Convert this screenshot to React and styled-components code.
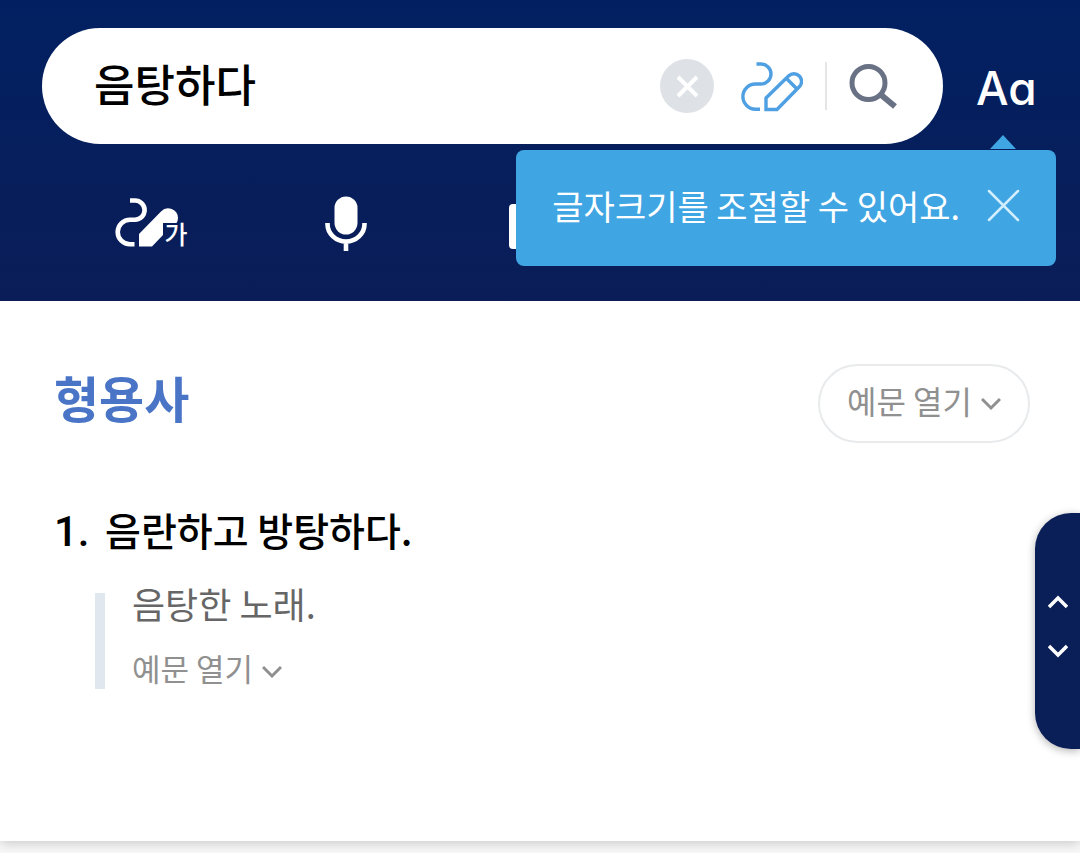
import { useState } from 'react';
import styled, { createGlobalStyle } from 'styled-components';

const GlobalStyle = createGlobalStyle`
    * {
        box-sizing: border-box;
    }

    body {
        margin: 0;
        background: #f8f8f8;
        font-family: 'Noto Sans CJK KR', sans-serif;
    }

    button {
        padding: 0;
        border: none;
        background: none;
        font: inherit;
        color: inherit;
        cursor: pointer;
    }

    svg {
        display: block;
    }
`;

const Page = styled.div`
    position: relative;
    min-height: 100vh;
    overflow: hidden;
`;

const Header = styled.header`
    position: relative;
    padding: 28px 44px 49px 42px;
    background: linear-gradient(#022061, #0a1d58);
`;

const TopRow = styled.div`
    display: flex;
    align-items: center;
    gap: 33px;
`;

const SearchForm = styled.form`
    flex: 1;
    min-width: 0;
    display: flex;
    align-items: center;
    height: 116px;
    padding: 0 46px 0 52px;
    border-radius: 58px;
    background: #fff;
`;

const SearchInput = styled.input`
    flex: 1;
    min-width: 0;
    height: 70px;
    padding: 0 0 6px;
    border: none;
    outline: none;
    background: none;
    font-family: inherit;
    font-size: 44px;
    font-weight: 500;
    line-height: 64px;
    color: #000;
`;

const ClearButton = styled.button`
    display: flex;
    align-items: center;
    justify-content: center;
    width: 54px;
    height: 54px;
    margin-right: 27px;
    border-radius: 50%;
    background: #dee2e7;
`;

const Divider = styled.span`
    width: 2px;
    height: 48px;
    margin: 0 22px;
    background: #e5e5e5;
`;

const FontSizeButton = styled.button`
    width: 60px;
    padding-top: 4px;
    font-family: Inter, sans-serif;
    font-size: 46px;
    font-weight: 500;
    font-feature-settings: 'cv11';
    line-height: 56px;
    color: #fff;
    white-space: nowrap;
`;

const ToolRow = styled.nav`
    display: grid;
    grid-template-columns: repeat(5, 1fr);
    align-items: center;
    height: 56px;
    margin: 52px 7px 0 11px;
    color: #fff;
`;

const ToolButton = styled.button`
    display: flex;
    align-items: center;
    justify-content: center;
`;

const HandwritingIcon = styled.span`
    position: relative;
    width: 72px;
    height: 50px;
    margin-bottom: 3px;
`;

const HandwritingLabel = styled.span`
    position: absolute;
    left: 50px;
    top: 17px;
    font-size: 25px;
    font-weight: 500;
    line-height: 36px;
`;

const Tooltip = styled.div`
    position: absolute;
    z-index: 1;
    top: 150px;
    right: 24px;
    display: flex;
    align-items: center;
    gap: 27px;
    height: 116px;
    padding: 0 36px 5px;
    border-radius: 8px;
    background: #3fa5e3;
    color: #fff;

    &::before {
        content: '';
        position: absolute;
        top: -15px;
        right: 40px;
        border: 13px solid transparent;
        border-top: none;
        border-bottom: 14px solid #3fa5e3;
    }
`;

const TooltipText = styled.p`
    margin: 0;
    font-size: 34px;
    line-height: 48px;
    white-space: nowrap;
`;

const Section = styled.section`
    padding: 63px 50px 152px 54px;
    background: #fff;
    box-shadow: 0 2px 12px rgba(0, 0, 0, 0.2);
`;

const SectionHeader = styled.div`
    display: flex;
    align-items: flex-start;
    justify-content: space-between;
`;

const PartOfSpeech = styled.h2`
    margin: 0;
    font-size: 49px;
    font-weight: 700;
    line-height: 66px;
    color: #4a75c7;
`;

const ExampleToggle = styled.button`
    display: flex;
    align-items: center;
    gap: 9px;
    font-size: ${(props) => (props.$outlined ? '32px' : '31px')};
    color: #909090;

    ${(props) =>
        props.$outlined &&
        `
        height: 79px;
        padding: 0 27px;
        border: 2px solid #e8eaec;
        border-radius: 40px;
    `}
`;

const ToggleLabel = styled.span`
    padding-bottom: 8px;
    line-height: 26px;
    white-space: nowrap;
`;

const MeaningList = styled.ol`
    margin: 58px 0 0;
    padding: 0;
    list-style: none;
`;

const Meaning = styled.li`
    display: grid;
    grid-template-columns: 51px 1fr;
    align-items: baseline;
    font-size: 39px;
    font-weight: 500;
    line-height: 56px;
    color: #000;
`;

const MeaningNumber = styled.span`
    font-family: Roboto, sans-serif;
    font-size: 42px;
`;

const Examples = styled.div`
    grid-column: 1 / -1;
    margin: 33px 0 0 41px;
    padding-left: 27px;
    border-left: 10px solid #e1e7ee;
    font-weight: 400;
`;

const ExampleText = styled.p`
    margin: -16px 0 26px;
    font-size: 36px;
    line-height: 52px;
    color: #666;
`;

const Pager = styled.aside`
    position: absolute;
    top: 513px;
    right: 0;
    display: flex;
    flex-direction: column;
    align-items: center;
    justify-content: center;
    gap: 19px;
    width: 45px;
    height: 236px;
    padding: 0 0 10px 1px;
    border-radius: 36px 0 0 36px;
    background: #0a1e58;
    box-shadow: 0 2px 8px rgba(0, 0, 0, 0.3);
    color: #fff;
`;

const PagerButton = styled.button`
    display: flex;
    align-items: center;
    justify-content: center;
    width: 40px;
    height: 30px;
`;

function CrossIcon({ size, strokeWidth, color, linecap }) {
    return (
        <svg width={size} height={size} viewBox={`0 0 ${size} ${size}`} stroke={color} strokeWidth={strokeWidth} strokeLinecap={linecap}>
            <path d={`M2 2L${size - 2} ${size - 2}M${size - 2} 2L2 ${size - 2}`} />
        </svg>
    );
}

function PencilIcon() {
    return (
        <svg width="62" height="52" viewBox="0 0 62 52" fill="none" stroke="#4f9fe3" strokeWidth="3.4">
            <path d="M15.500 4H20A10 10 0 0 1 20 24H14.500A12.600 12.600 0 0 0 14.500 49.200H19" />
            <path d="M25 49.500V38L47.500 16A7.600 7.600 0 0 1 58.300 26.800L36 49.500ZM45.500 18.500L56 29" />
        </svg>
    );
}

function SearchIcon() {
    return (
        <svg width="48" height="46" viewBox="0 0 48 46" fill="none" stroke="#697185">
            <circle cx="19.500" cy="20" r="16.500" strokeWidth="5" />
            <path d="M31 31L46 43.500" strokeWidth="6" />
        </svg>
    );
}

function WritingIcon() {
    return (
        <svg width="72" height="50" viewBox="0 0 72 50" fill="none">
            <path d="M15 2.500H20A9.600 9.600 0 0 1 20 21.700H15A12.300 12.300 0 0 0 15 46.300H19.500" stroke="currentColor" strokeWidth="4.600" />
            <path d="M24 48.500V36L46 13.500A9.800 9.800 0 0 1 63 20Q63 22.500 61.500 25H48V37L37 48.500Z" fill="currentColor" />
        </svg>
    );
}

function MicIcon() {
    return (
        <svg width="42" height="56" viewBox="0 0 42 56" fill="none">
            <rect x="9.500" y="0.500" width="23" height="38" rx="11.500" fill="currentColor" />
            <path d="M2.500 27V28A18.500 17.500 0 0 0 39.500 28V27M21 45V55" stroke="currentColor" strokeWidth="4.600" />
        </svg>
    );
}

function CameraIcon() {
    return (
        <svg width="64" height="56" viewBox="0 0 64 56" fill="none">
            <path d="M4 8H19L23 3H41L45 8H60Q64 8 64 12V49Q64 53 60 53H4Q0 53 0 49V12Q0 8 4 8Z" fill="currentColor" />
            <circle cx="32" cy="30" r="12" stroke="#0a1d58" strokeWidth="4" />
        </svg>
    );
}

function ChevronIcon({ width = 20, strokeWidth = 3, up = false }) {
    return (
        <svg width={width} height="14" viewBox="0 0 20 14" fill="none" stroke="currentColor" strokeWidth={strokeWidth}>
            <path d={up ? 'M1 12L10 3L19 12' : 'M1 2L10 11L19 2'} />
        </svg>
    );
}

export default function App() {
    const [query, setQuery] = useState('음탕하다');
    const [tooltipOpen, setTooltipOpen] = useState(true);

    function handleSubmit(event) {
        event.preventDefault();
    }

    return (
        <Page>
            <GlobalStyle />
            <Header>
                <TopRow>
                    <SearchForm onSubmit={handleSubmit}>
                        <SearchInput
                            type="text"
                            aria-label="검색어"
                            value={query}
                            onChange={(event) => setQuery(event.target.value)}
                        />
                        <ClearButton type="button" aria-label="지우기" onClick={() => setQuery('')}>
                            <CrossIcon size={23} strokeWidth={4} color="#fff" />
                        </ClearButton>
                        <button type="button" aria-label="필기 입력">
                            <PencilIcon />
                        </button>
                        <Divider />
                        <button type="submit" aria-label="검색">
                            <SearchIcon />
                        </button>
                    </SearchForm>
                    <FontSizeButton type="button" onClick={() => setTooltipOpen(true)}>
                        Aa
                    </FontSizeButton>
                </TopRow>
                <ToolRow>
                    <ToolButton type="button" aria-label="필기 인식">
                        <HandwritingIcon>
                            <WritingIcon />
                            <HandwritingLabel>가</HandwritingLabel>
                        </HandwritingIcon>
                    </ToolButton>
                    <ToolButton type="button" aria-label="음성 검색">
                        <MicIcon />
                    </ToolButton>
                    <ToolButton type="button" aria-label="사진 검색">
                        <CameraIcon />
                    </ToolButton>
                </ToolRow>
                {tooltipOpen && (
                    <Tooltip role="status">
                        <TooltipText>글자크기를 조절할 수 있어요.</TooltipText>
                        <button type="button" aria-label="닫기" onClick={() => setTooltipOpen(false)}>
                            <CrossIcon size={33} strokeWidth={2.5} color="#d3efff" linecap="round" />
                        </button>
                    </Tooltip>
                )}
            </Header>
            <Section>
                <SectionHeader>
                    <PartOfSpeech>형용사</PartOfSpeech>
                    <ExampleToggle type="button" $outlined>
                        <ToggleLabel>예문 열기</ToggleLabel>
                        <ChevronIcon />
                    </ExampleToggle>
                </SectionHeader>
                <MeaningList>
                    <Meaning>
                        <MeaningNumber>1.</MeaningNumber>
                        <span>음란하고 방탕하다.</span>
                        <Examples>
                            <ExampleText>음탕한 노래.</ExampleText>
                            <ExampleToggle type="button">
                                <ToggleLabel>예문 열기</ToggleLabel>
                                <ChevronIcon />
                            </ExampleToggle>
                        </Examples>
                    </Meaning>
                </MeaningList>
            </Section>
            <Pager>
                <PagerButton type="button" aria-label="이전">
                    <ChevronIcon strokeWidth={3.5} up />
                </PagerButton>
                <PagerButton type="button" aria-label="다음">
                    <ChevronIcon strokeWidth={3.5} />
                </PagerButton>
            </Pager>
        </Page>
    );
}
